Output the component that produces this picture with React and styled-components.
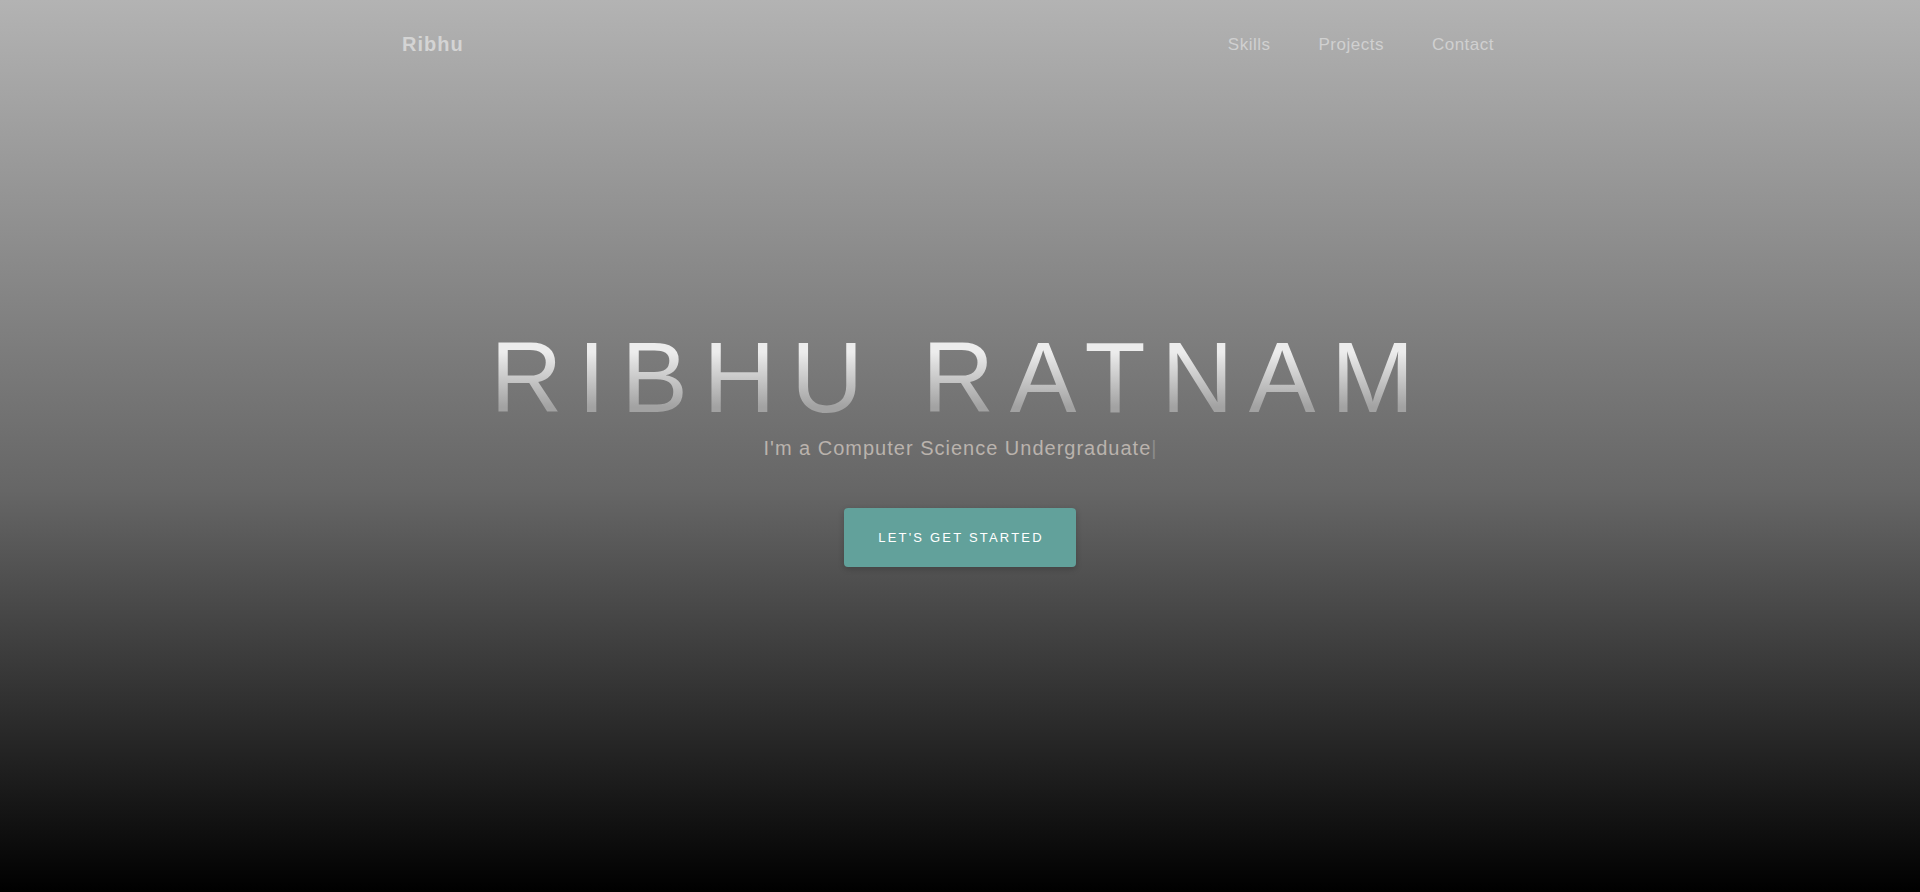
import React from 'react';
import styled, { createGlobalStyle } from 'styled-components';

const GlobalStyle = createGlobalStyle`
  html, body {
    margin: 0;
    padding: 0;
  }

  body {
    font-family: 'Liberation Sans', Arial, sans-serif;
    background: #000;
  }
`;

const Hero = styled.section`
  min-height: 892px;
  display: flex;
  flex-direction: column;
  background: linear-gradient(to bottom, #b3b3b3 0%, #666666 55%, #000000 100%);
`;

const Nav = styled.nav`
  height: 88px;
  box-sizing: border-box;
  padding: 33px 426px 0 402px;
  display: flex;
  align-items: flex-start;
  justify-content: space-between;
`;

const Brand = styled.a`
  font-size: 20px;
  font-weight: 700;
  letter-spacing: 1px;
  color: #d4d4d4;
  text-decoration: none;
`;

const Links = styled.ul`
  display: flex;
  gap: 48px;
  margin: 2px 0 0;
  padding: 0;
  list-style: none;
`;

const NavLink = styled.a`
  font-size: 17px;
  letter-spacing: 0.5px;
  color: #d0d0d0;
  text-decoration: none;
`;

const Content = styled.div`
  padding-top: 239px;
  display: flex;
  flex-direction: column;
  align-items: center;
`;

const Title = styled.h1`
  margin: 0;
  font-family: 'Liberation Sans', Arial, sans-serif;
  font-weight: 400;
  font-size: 100px;
  line-height: 1;
  letter-spacing: 15.5px;
  background: linear-gradient(to bottom, #ececec 25%, #a2a2a2 80%);
  -webkit-background-clip: text;
  background-clip: text;
  color: transparent;
`;

const Subtitle = styled.p`
  margin: 9px 0 0;
  font-size: 20px;
  line-height: 24px;
  letter-spacing: 1px;
  color: #bab3ad;
`;

const Cursor = styled.span`
  color: #8c8c8c;
  letter-spacing: 0;
`;

const Button = styled.a`
  margin-top: 48px;
  width: 232px;
  height: 59px;
  display: flex;
  align-items: center;
  justify-content: center;
  padding-left: 2px;
  box-sizing: border-box;
  background: #62a19b;
  border-radius: 4px;
  box-shadow: 0 2px 6px rgba(0, 0, 0, 0.2);
  font-size: 13px;
  letter-spacing: 2.2px;
  color: #ffffff;
  text-decoration: none;
  text-transform: uppercase;
`;

const navItems = ['Skills', 'Projects', 'Contact'];

const App = () => (
  <>
    <GlobalStyle />
    <Hero>
      <Nav>
        <Brand href="#">Ribhu</Brand>
        <Links>
          {navItems.map((item) => (
            <li key={item}>
              <NavLink href={`#${item.toLowerCase()}`}>{item}</NavLink>
            </li>
          ))}
        </Links>
      </Nav>
      <Content>
        <Title>RIBHU RATNAM</Title>
        <Subtitle>
          I&apos;m a Computer Science Undergraduate<Cursor>|</Cursor>
        </Subtitle>
        <Button href="#skills">Let&apos;s get started</Button>
      </Content>
    </Hero>
  </>
);

export default App;
